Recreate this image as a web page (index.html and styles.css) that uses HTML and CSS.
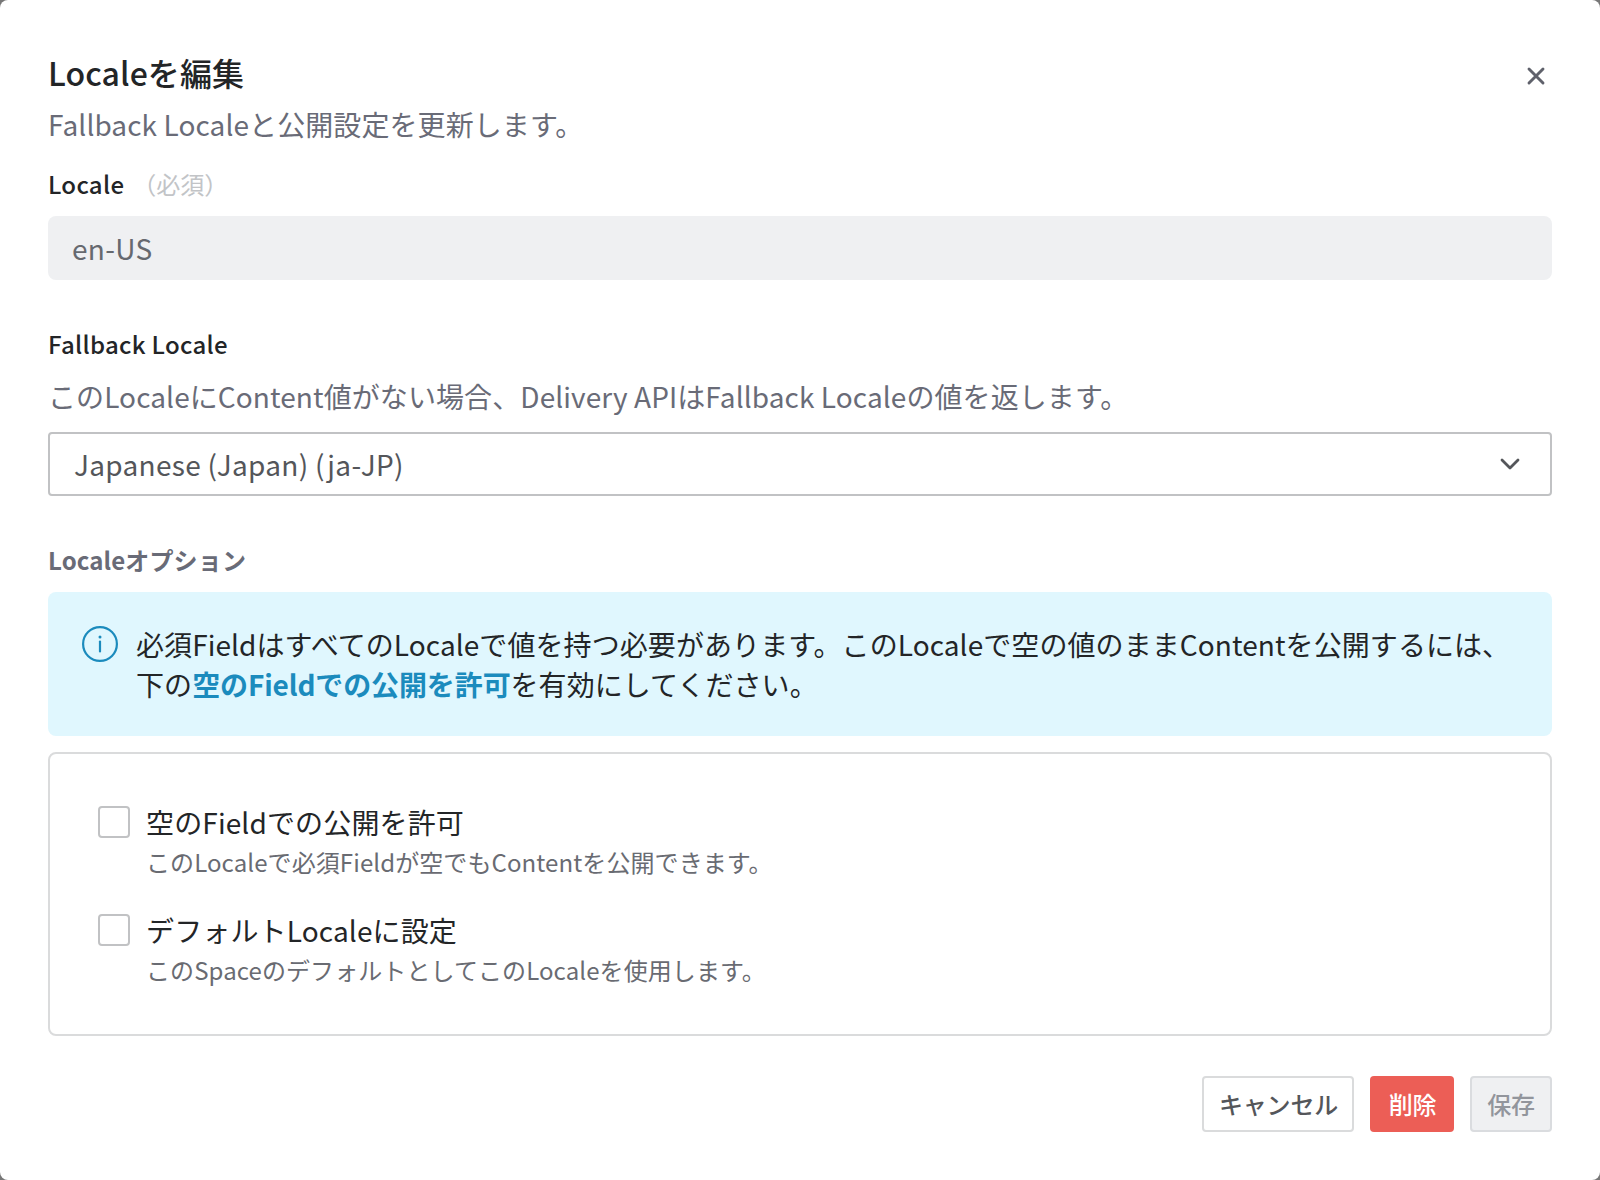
FILE: index.html
```html
<!DOCTYPE html>
<html lang="ja">
<head>
<meta charset="utf-8">
<title>Localeを編集</title>
<link rel="stylesheet" href="styles.css">
</head>
<body>
<main class="modal">
  <header class="header">
    <div>
      <h1 class="title">Localeを編集</h1>
      <p class="subtitle">Fallback Localeと公開設定を更新します。</p>
    </div>
    <button class="close" aria-label="閉じる">
      <svg width="20" height="20" viewBox="0 0 20 20"><path d="M3 3 17 17M17 3 3 17"/></svg>
    </button>
  </header>
  <div class="label-row">
    <span class="label">Locale</span>
    <span class="required">（必須）</span>
  </div>
  <div class="input"><span>en-US</span></div>
  <div class="label fallback-label">Fallback Locale</div>
  <p class="help">このLocaleにContent値がない場合、Delivery APIはFallback Localeの値を返します。</p>
  <div class="select">
    <span>Japanese (Japan) (ja-JP)</span>
    <svg width="22" height="14" viewBox="0 0 22 14"><path d="M3 3 11 11 19 3"/></svg>
  </div>
  <h2 class="section">Localeオプション</h2>
  <div class="note">
    <svg class="info" width="36" height="36" viewBox="0 0 36 36"><circle cx="18" cy="18" r="16.900"/><path d="M18 15.500V25.500"/><circle class="dot" cx="18" cy="11" r="1.500"/></svg>
    <p class="note-text">必須FieldはすべてのLocaleで値を持つ必要があります。このLocaleで空の値のままContentを公開するには、<br>下の<strong>空のFieldでの公開を許可</strong>を有効にしてください。</p>
  </div>
  <div class="options">
    <div class="option">
      <span class="checkbox"></span>
      <div class="option-text">
        <div class="option-name">空のFieldでの公開を許可</div>
        <div class="option-help">このLocaleで必須Fieldが空でもContentを公開できます。</div>
      </div>
    </div>
    <div class="option">
      <span class="checkbox"></span>
      <div class="option-text">
        <div class="option-name">デフォルトLocaleに設定</div>
        <div class="option-help">このSpaceのデフォルトとしてこのLocaleを使用します。</div>
      </div>
    </div>
  </div>
  <footer class="footer">
    <button class="button cancel">キャンセル</button>
    <button class="button delete">削除</button>
    <button class="button save">保存</button>
  </footer>
</main>
</body>
</html>
```

FILE: styles.css
```css
* { box-sizing: border-box; }
body {
  margin: 0;
  background: #777;
  font-family: "Noto Sans CJK JP", sans-serif;
  letter-spacing: .09px;
  color: #232527;
}
h1, h2, p { margin: 0; }
button { font: inherit; padding: 0; border: 0; background: none; }
svg { flex: none; fill: none; stroke: currentColor; stroke-linecap: round; stroke-linejoin: round; }
.modal {
  width: 1600px;
  height: 1180px;
  padding: 50px 48px 48px;
  background: #fff;
  border-radius: 8px;
  overflow: hidden;
}
.header { display: flex; justify-content: space-between; align-items: flex-start; height: 114px; }
.title { font-size: 32px; line-height: 44px; font-weight: 500; }
.subtitle { margin-top: 8px; font-size: 28px; line-height: 44px; color: #696b77; }
.close { display: flex; margin: 16px 6px 0 0; color: #5f616b; }
.close svg { stroke-width: 2.900; }
.label-row { display: flex; gap: 8px; height: 40px; align-items: center; }
.label { font-size: 24px; line-height: 40px; font-weight: 500; letter-spacing: .3px; }
.required { font-size: 24px; line-height: 40px; color: #c2c4c7; letter-spacing: 0; }
.input {
  height: 64px;
  margin-top: 12px;
  padding: 0 24px;
  border-radius: 8px;
  background: #eff0f2;
  color: #66696f;
  font-size: 28px;
  line-height: 64px;
  letter-spacing: .35px;
}
.fallback-label { margin-top: 44px; }
.help { margin-top: 10px; font-size: 28px; line-height: 44px; color: #696b77; }
.select {
  display: flex;
  justify-content: space-between;
  align-items: center;
  height: 64px;
  margin-top: 14px;
  padding: 0 29px 0 24px;
  border: 2px solid #c1c2c4;
  border-radius: 4px;
  color: #54565a;
  font-size: 28px;
  letter-spacing: .3px;
}
.select svg { stroke-width: 2.800; }
.section { margin-top: 44px; font-size: 24px; line-height: 40px; font-weight: 700; color: #696b77; letter-spacing: .13px; }
.note {
  display: flex;
  gap: 18px;
  height: 144px;
  margin-top: 12px;
  padding: 32px 34px;
  border-radius: 8px;
  background: #e0f7fe;
}
.info { margin-top: 2px; color: #1b8bbd; stroke-width: 2.200; }
.dot { fill: currentColor; stroke: none; }
.note-text { font-size: 28px; line-height: 40px; white-space: nowrap; letter-spacing: .08px; }
.note-text strong { font-weight: 700; color: #1b8bbd; letter-spacing: -.12px; }
.options {
  display: flex;
  flex-direction: column;
  gap: 28px;
  height: 284px;
  margin-top: 16px;
  padding: 48px;
  border: 2px solid #dadbdc;
  border-radius: 8px;
}
.option { display: flex; gap: 16px; height: 80px; }
.checkbox { width: 32px; height: 32px; margin-top: 4px; border: 2px solid #c1c2c4; border-radius: 4px; }
.option-name { font-size: 28px; line-height: 40px; letter-spacing: .14px; }
.option-help { font-size: 24px; line-height: 40px; color: #696b72; }
.footer { display: flex; justify-content: flex-end; gap: 16px; margin-top: 40px; }
.button { height: 56px; padding-bottom: 2px; border-radius: 4px; font-size: 24px; font-weight: 500; letter-spacing: -.2px; }
.cancel { width: 152px; padding-left: 1px; border: 2px solid #dadbdc; background: #fff; color: #54565a; }
.delete { width: 84px; padding-left: 1px; background: #ec5e56; color: #fff; }
.save { width: 82px; border: 2px solid #dadcdf; background: #eff0f2; color: #92959c; }
```
